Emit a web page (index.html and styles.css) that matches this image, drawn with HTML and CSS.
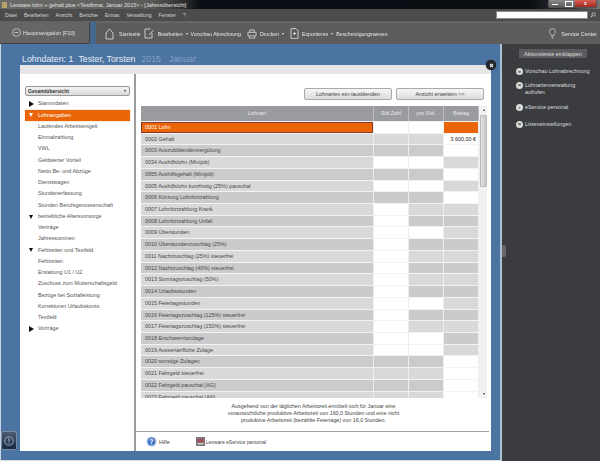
FILE: index.html
```html
<!DOCTYPE html>
<html lang="de">
<head>
<meta charset="utf-8">
<title>Lexware lohn + gehalt plus</title>
<link rel="stylesheet" href="styles.css">
</head>
<body>
<div class="app">
  <header class="titlebar">
    <span class="app-icon"></span>
    <span class="title-text">Lexware lohn + gehalt plus &lt;Testfirma, Januar 2015&gt; - [Jahresübersicht]</span>
    <div class="winbtns"><span class="wb wb-min"></span><span class="wb wb-max"></span><span class="wb wb-close">x</span></div>
  </header>
  <nav class="menubar">
    <span class="m">Datei</span><span class="m">Bearbeiten</span><span class="m">Ansicht</span><span class="m">Berichte</span><span class="m">Extras</span><span class="m">Verwaltung</span><span class="m">Fenster</span><span class="m">?</span>
    <span class="search"></span>
    <svg class="search-ico" width="6" height="6" viewBox="0 0 6 6"><circle cx="3.6" cy="2.4" r="1.7" fill="none" stroke="#ccc" stroke-width=".8"/><path d="M2.4 3.6 .6 5.4" stroke="#ccc"/></svg>
  </nav>
  <div class="toolbar">
    <div class="navbtn">
      <svg width="9" height="9" viewBox="0 0 9 9"><circle cx="4.5" cy="4.5" r="3.9" fill="none" stroke="#ddd" stroke-width=".7"/><path d="M2.6 4.5h3.8" stroke="#ddd" stroke-width=".8"/></svg>
      <span>Hauptnavigation [F10]</span>
    </div>
    <div class="tools">
      <svg class="t-ico" width="9" height="12" viewBox="0 0 9 12"><path d="M1 5 4.5 1 8 5v6H1z" fill="none" stroke="#e4e4e4" stroke-width=".8"/></svg>
      <span class="t t-start">Startseite</span>
      <svg class="t-ico" width="11" height="11" viewBox="0 0 11 11"><path d="M6.5 1H1v9h7V5M5 7l4.5-5" fill="none" stroke="#e4e4e4" stroke-width=".8"/></svg>
      <span class="t">Bearbeiten</span><span class="caret"></span>
      <span class="t t-vor">Vorschau Abrechnung</span>
      <svg class="t-ico" width="10" height="10" viewBox="0 0 11 10"><path d="M3 3V.6h5V3M1 3.2h9V7H1zM2.500 7v2.500h6V7" fill="none" stroke="#e4e4e4" stroke-width=".8"/></svg>
      <span class="t">Drucken</span><span class="caret"></span>
      <svg class="t-ico t-exp" width="9" height="11" viewBox="0 0 9 11"><path d="M1 .6h5l2 2v8H1zM3 5.500h3M4.500 4v3" fill="none" stroke="#e4e4e4" stroke-width=".8"/></svg>
      <span class="t">Exportieren</span><span class="caret"></span>
      <span class="t">Bescheinigungswesen</span>
      <div class="service">
        <svg width="7" height="11" viewBox="0 0 7 11"><path d="M2.200 7.500C1.800 6 .6 5.500.6 3.500a2.900 2.900 0 0 1 5.800 0c0 2-1.200 2.500-1.600 4zM2.300 9h2.400M2.800 10.300h1.400" fill="none" stroke="#ddd" stroke-width=".7"/></svg>
        <span class="t">Service Center</span>
      </div>
    </div>
  </div>
  <main class="main">
    <section class="blue">
      <h1 class="heading"><span>Lohndaten: 1</span><span>Tester, Torsten</span><span class="dim">2015</span><span class="dim">Januar</span></h1>
      <div class="card">
        <div class="strip"></div>
        <div class="card-body">
          <aside class="tree">
            <div class="select"><span>Gesamtübersicht</span><span class="sel-caret"></span></div>
            <ul class="tree-list">
              <li class="top"><i class="tri-r"></i>Stammdaten</li>
              <li class="top active"><i class="tri-d"></i>Lohnangaben</li>
              <li>Laufendes Arbeitsentgelt</li>
              <li>Einmalzahlung</li>
              <li>VWL</li>
              <li>Geldwerter Vorteil</li>
              <li>Netto Be- und Abzüge</li>
              <li>Dienstwagen</li>
              <li>Stundenerfassung</li>
              <li>Stunden Berufsgenossenschaft</li>
              <li class="top"><i class="tri-d"></i>betriebliche Altersvorsorge</li>
              <li>Verträge</li>
              <li>Jahressummen</li>
              <li class="top"><i class="tri-d"></i>Fehlzeiten und Textfeld</li>
              <li>Fehlzeiten</li>
              <li>Erstattung U1 / U2</li>
              <li>Zuschuss zum Mutterschaftsgeld</li>
              <li>Bezüge bei Sozialleistung</li>
              <li>Korrekturen Urlaubskonto</li>
              <li>Textfeld</li>
              <li class="top"><i class="tri-r"></i>Vorträge</li>
            </ul>
          </aside>
          <div class="detail">
            <div class="actions">
              <button class="btn">Lohnarten ein-/ausblenden</button>
              <button class="btn">Ansicht erweitern &gt;&gt;</button>
            </div>
            <div class="tablewrap">
              <div class="table">
                <div class="row head"><div>Lohnart</div><div>Std.Zahl</div><div>pro Std.</div><div>Betrag</div></div>
                <div class="row sel"><div class="name">0001 Lohn</div><div class="w"></div><div class="w"></div><div class="o"></div></div>
                <div class="row"><div class="name">0002 Gehalt</div><div></div><div></div><div class="w amt">3.600,00 €</div></div>
                <div class="row"><div class="name">0003 Auszubildendenvergütung</div><div></div><div></div><div class="w"></div></div>
                <div class="row"><div class="name">0034 Aushilfslohn (Minijob)</div><div class="w"></div><div class="w"></div><div></div></div>
                <div class="row"><div class="name">0955 Aushilfsgehalt (Minijob)</div><div></div><div></div><div class="w"></div></div>
                <div class="row"><div class="name">0005 Aushilfslohn kurzfristig (25%) pauschal</div><div class="w"></div><div class="w"></div><div></div></div>
                <div class="row"><div class="name">0006 Kürzung Lohnfortzahlung</div><div></div><div></div><div class="w"></div></div>
                <div class="row"><div class="name">0007 Lohnfortzahlung Krank</div><div class="w"></div><div></div><div></div></div>
                <div class="row"><div class="name">0008 Lohnfortzahlung Unfall</div><div class="w"></div><div></div><div></div></div>
                <div class="row"><div class="name">0009 Überstunden</div><div class="w"></div><div class="w"></div><div></div></div>
                <div class="row"><div class="name">0010 Überstundenzuschlag (25%)</div><div class="w"></div><div></div><div></div></div>
                <div class="row"><div class="name">0011 Nachtzuschlag (25%) steuerfrei</div><div class="w"></div><div></div><div></div></div>
                <div class="row"><div class="name">0012 Nachtzuschlag (40%) steuerfrei</div><div class="w"></div><div></div><div></div></div>
                <div class="row"><div class="name">0013 Sonntagszuschlag (50%)</div><div class="w"></div><div></div><div></div></div>
                <div class="row"><div class="name">0014 Urlaubsstunden</div><div class="w"></div><div></div><div></div></div>
                <div class="row"><div class="name">0015 Feiertagsstunden</div><div class="w"></div><div class="w"></div><div></div></div>
                <div class="row"><div class="name">0016 Feiertagszuschlag (125%) steuerfrei</div><div class="w"></div><div></div><div></div></div>
                <div class="row"><div class="name">0017 Feiertagszuschlag (150%) steuerfrei</div><div class="w"></div><div></div><div></div></div>
                <div class="row"><div class="name">0018 Erschwerniszulage</div><div class="w"></div><div class="w"></div><div></div></div>
                <div class="row"><div class="name">0019 Aussertarifliche Zulage</div><div class="w"></div><div class="w"></div><div></div></div>
                <div class="row"><div class="name">0020 sonstige Zulagen</div><div></div><div></div><div class="w"></div></div>
                <div class="row"><div class="name">0021 Fahrgeld steuerfrei</div><div></div><div></div><div class="w"></div></div>
                <div class="row"><div class="name">0022 Fahrgeld pauschal (AG)</div><div></div><div></div><div class="w"></div></div>
                <div class="row"><div class="name">0023 Fahrgeld pauschal (AN)</div><div></div><div></div><div class="w"></div></div>
              </div>
              <div class="scrollbar"><span class="arrow-up"></span><span class="thumb"></span><span class="arrow-down"></span></div>
            </div>
            <p class="note">Ausgehend von der täglichen Arbeitszeit ermittelt sich für Januar eine voraussichtliche produktive Arbeitszeit von 160,0 Stunden und eine nicht produktive Arbeitszeit (bezahlte Feiertage) von 16,0 Stunden.</p>
            <footer class="foot">
              <svg class="help" width="11" height="11" viewBox="0 0 11 11"><circle cx="5.500" cy="5.500" r="5.200" fill="#b9cdea"/><circle cx="5.500" cy="5.500" r="3.800" fill="#3f70c4"/><text x="5.500" y="8" font-size="7" text-anchor="middle" fill="#fff" class="help-q">?</text></svg>
              <span class="foot-t">Hilfe</span>
              <svg class="lex" width="9" height="9" viewBox="0 0 9 9"><rect width="9" height="9" fill="#777"/><rect x="1.500" y="2" width="6" height="3" fill="#b04c5a"/><rect x="1.500" y="6" width="6" height="1.500" fill="#ccc"/></svg>
              <span class="foot-t lex-t">Lexware eService personal</span>
            </footer>
          </div>
        </div>
        <span class="close"><svg width="5" height="5" viewBox="0 0 5 5"><path d="M1 1l3 3M4 1 1 4" stroke="#eee" stroke-width="1.100"/></svg></span>
      </div>
      <span class="info"><svg width="10" height="10" viewBox="0 0 10 10"><circle cx="5" cy="5" r="4.300" fill="none" stroke="#ccd" stroke-width=".7"/><path d="M5 2.300v3.300M5 6.600v1.100" stroke="#ccd" stroke-width=".9"/></svg></span>
    </section>
    <aside class="panel">
      <span class="handle"></span>
      <button class="collapse">Aktionsleiste einklappen</button>
      <ul class="links">
        <li><i class="dot">»</i><span>Vorschau Lohnabrechnung</span></li>
        <li class="l2"><i class="dot">×</i><span>Lohnartenverwaltung<br>aufrufen</span></li>
        <li class="l3"><i class="dot">›</i><span>eService personal</span></li>
        <li class="l4"><i class="dot">×</i><span>Listeneinstellungen</span></li>
      </ul>
    </aside>
  </main>
</div>
</body>
</html>
```
FILE: styles.css
```css
* { box-sizing: border-box; }
html, body { margin: 0; padding: 0; background: #3b3c40; }
body { width: 600px; height: 461px; overflow: hidden; font-family: "Liberation Sans", Arial, sans-serif; font-size: 5.4px; color: #444; }
ul { list-style: none; margin: 0; padding: 0; }
.app { width: 600px; height: 461px; display: flex; flex-direction: column; filter: blur(.35px); }

.titlebar { height: 9px; flex: none; display: flex; align-items: center; padding-left: 2px; gap: 3px; color: #d8d8d8; font-size: 5.500px;
  background: linear-gradient(90deg, #6a6a68 0, #5c5c5a 150px, #2c2c2c 185px, #0a0e14 200px, #0a0d12 530px, #3a3d40 575px, #777 600px); }
.app-icon { width: 5px; height: 6px; background: #b7a46a; flex: none; }
.title-text { color: #e0e0e0; }
.winbtns { margin-left: auto; margin-right: 3px; align-self: flex-start; display: flex; height: 8px; border: 1px solid #555; border-top: 0; border-radius: 0 0 2px 2px; }
.wb { display: block; height: 7px; width: 13px; background: linear-gradient(#8b8b8b, #5a5a5a); position: relative; font-size: 5px; line-height: 6px; text-align: center; color: #fff; font-weight: bold; }
.wb-close { width: 21px; background: linear-gradient(#d95f55, #a02a20); }
.wb-min::after { content: ""; position: absolute; left: 3px; bottom: 2px; width: 6px; height: 1px; background: #fff; }
.wb-max::after { content: ""; position: absolute; left: 3px; top: 1px; width: 6px; height: 4px; border: 1px solid #fff; }

.menubar { height: 13px; flex: none; display: flex; align-items: center; padding-left: 5px; background: #4c4c4c; color: #d5d5d5; border-bottom: 1px solid #626262; font-size: 5.100px; gap: 7px; }
.search { width: 92px; height: 8px; background: #fff; margin-left: auto; border: 1px solid #8a8a8a; }
.search-ico { margin: 0 4px 0 -5px; }

.toolbar { height: 22px; flex: none; display: flex; background: #46688f; box-shadow: 0 1px 0 #30343a; position: relative; font-size: 5.150px; }
.navbtn { width: 90px; display: flex; align-items: center; gap: 2px; padding-left: 12px; background: #656567; color: #e2e2e2; border-right: 1px solid #3e3e3e; border-bottom: 1px solid #3e3e3e; border-radius: 0 0 2px 0; font-size: 5.300px; }
.tools { margin-left: 6px; flex: 1; display: flex; align-items: center; background: #5c5c5c; color: #e6e6e6; padding-left: 9px; border-top: 1px solid #686868; }
.t { white-space: nowrap; }
.t-ico { flex: none; }
.t-start { margin: 0 3px 0 5px; }
.t-ico + .t { margin-left: 3px; }
.t-ico + .t-start { margin-left: 5px; }
.caret { width: 0; height: 0; border: 1.500px solid transparent; border-top: 2px solid #e6e6e6; border-bottom: 0; margin: 0 3px 0 3px; }
.t-vor { margin: 0 6px 0 0; }
.t-exp { margin-left: 3px; }
.service { margin-left: auto; margin-right: 3px; display: flex; align-items: center; gap: 5px; font-size: 5.400px; }

.main { flex: 1; min-height: 0; display: flex; }
.blue { width: 502px; flex: none; background: #4b74a2; position: relative; border-left: 1px solid #c8d4e2; border-bottom: 1px solid #d6dee8; border-right: 2px solid #aebfd2; padding: 9px 9px 9px 19px; display: flex; flex-direction: column; }
.heading { margin: 0 0 0 2px; height: 12px; font-weight: normal; font-size: 8.800px; line-height: 12px; color: #e4ecf5; display: flex; gap: 5px; }
.dim { color: #86a1c2; }
.dim:nth-child(3) { margin-left: 1px; }
.dim:nth-child(4) { margin-left: 3px; }
.card { flex: 1; min-height: 0; background: #fff; position: relative; display: flex; flex-direction: column; }
.strip { height: 9px; flex: none; background: #e6e6e6; }
.card-body { flex: 1; min-height: 0; display: flex; }
.close { position: absolute; right: -5px; top: -5px; width: 10px; height: 10px; border-radius: 50%; background: #22262b; display: flex; align-items: center; justify-content: center; box-shadow: 0 0 1px #111; }
.info { position: absolute; left: 0; bottom: 10px; width: 16px; height: 19px; border-radius: 2px; background: linear-gradient(#4c5c70, #142a44); border: 1px solid #7a8ca2; display: flex; align-items: center; justify-content: center; }

.tree { width: 114px; flex: none; padding: 12px 4px 0 5px; }
.select { height: 10px; display: flex; align-items: center; justify-content: space-between; padding: 0 3px 0 2px; border: 1px solid #999; border-radius: 2px; background: linear-gradient(#f4f4f4, #d8d8d8); font-weight: bold; font-size: 5px; color: #333; }
.sel-caret { width: 0; height: 0; border: 1.500px solid transparent; border-top: 2px solid #222; border-bottom: 0; }
.tree-list { margin-top: 2.400px; }
.tree-list li { height: 11.250px; line-height: 11.250px; padding-left: 13px; white-space: nowrap; color: #555; position: relative; }
.tree-list .top { display: flex; align-items: center; padding-left: 4px; gap: 0; }
.tree-list .active { background: #ea6508; color: #fff; box-shadow: 0 0 1px #f0a060; }
.tree-list i { display: block; width: 9px; flex: none; position: relative; height: 6px; }
.tri-r::before { content: ""; position: absolute; left: 0; top: 0; border: 3px solid transparent; border-left: 5px solid #111; border-right: 0; }
.tri-d::before { content: ""; position: absolute; left: 0; top: 1px; border: 2.500px solid transparent; border-top: 4.500px solid #111; border-bottom: 0; }
.active .tri-d::before { border-top-color: #fff; }

.detail { flex: 1; min-width: 0; border-left: 2px solid #9c9c9c; display: flex; flex-direction: column; }
.actions { padding: 14px 7px 0 0; display: flex; justify-content: flex-end; gap: 4px; height: 32px; flex: none; }
.btn { width: 88px; height: 12px; padding: 0; border: 1px solid #aaa; border-radius: 2px; background: linear-gradient(#f6f6f6, #dcdcdc); font: inherit; color: #444; }
.tablewrap { margin-left: 5px; width: 346px; height: 292px; flex: none; display: flex; overflow: hidden; background: #f2f2f2; }
.table { width: 338px; flex: none; }
.row { display: grid; grid-template-columns: 233px 35px 35px 35px; height: 11.720px; padding-bottom: 1px; }
.row > div { background: #cbcbcb; border-right: 1px solid #eee; overflow: hidden; white-space: nowrap; }
.row:nth-child(odd) > div { background: #d9d9d9; }
.row .name { padding-left: 4px; line-height: 10.700px; color: #484848; }
.row > .w, .row:nth-child(odd) > .w { background: #fff; }
.row > .o { background: #ea6508; }
.sel .name, .row.sel:nth-child(odd) .name { background: #ea6508; color: #fff; box-shadow: inset 0 0 0 1px #8a3a30; }
.amt { text-align: right; padding-right: 2px; line-height: 10.700px; color: #222; }
.head { height: 16px; }
.row.head > div { background: #9a9b9e; color: #e8e8e8; text-align: center; line-height: 15px; border-right: 1px solid #bbb; }
.scrollbar { width: 7px; margin-left: 1px; display: flex; flex-direction: column; align-items: center; background: #f2f2f2; position: relative; }
.arrow-up { margin-top: 3px; border: 1.500px solid transparent; border-bottom: 2px solid #333; border-top: 0; }
.thumb { width: 7px; height: 72px; margin-top: 4px; background: linear-gradient(90deg, #e2e2e2, #c6c6c6); border: 1px solid #bbb; border-radius: 1px; }
.arrow-down { margin-top: auto; margin-bottom: 3px; border: 1.500px solid transparent; border-top: 2px solid #333; border-bottom: 0; }
.note { margin: 5px auto 0; width: 186px; text-align: center; line-height: 6.900px; color: #444; font-size: 5.350px; }
.foot { margin-top: auto; height: 20px; display: flex; align-items: center; padding-left: 10px; border-top: 1px solid #a0a0a0; flex: none; margin-right: 2px; }
.help { flex: none; }
.help-q { font-family: "Liberation Sans", sans-serif; font-weight: bold; }
.foot-t { margin-left: 2px; white-space: nowrap; }
.lex-t { margin-left: 1px; font-size: 5px; }
.lex { margin-left: 26px; flex: none; }

.panel { flex: 1; min-width: 0; background: #3b3c40; color: #dcdcdc; position: relative; padding-top: 5px; }
.handle { position: absolute; left: 0; top: 201px; width: 4px; height: 12px; background: #666; border-radius: 0 2px 2px 0; }
.collapse { display: block; margin: 0 0 0 17px; width: 68px; height: 9px; padding: 0; border: 0; background: #5c5c60; font: inherit; color: #dcdcdc; }
.links { margin-top: 9.500px; padding-left: 14px; }
.links li { display: flex; align-items: flex-start; gap: 2px; line-height: 7px; }
.l2 { margin-top: 7px; }
.l3 { margin-top: 8px; }
.l4 { margin-top: 10px; }
.dot { flex: none; display: block; width: 7px; height: 7px; border-radius: 50%; background: #dcdcdc; color: #444; font-style: normal; font-size: 6px; line-height: 6.500px; text-align: center; font-weight: bold; }
```
